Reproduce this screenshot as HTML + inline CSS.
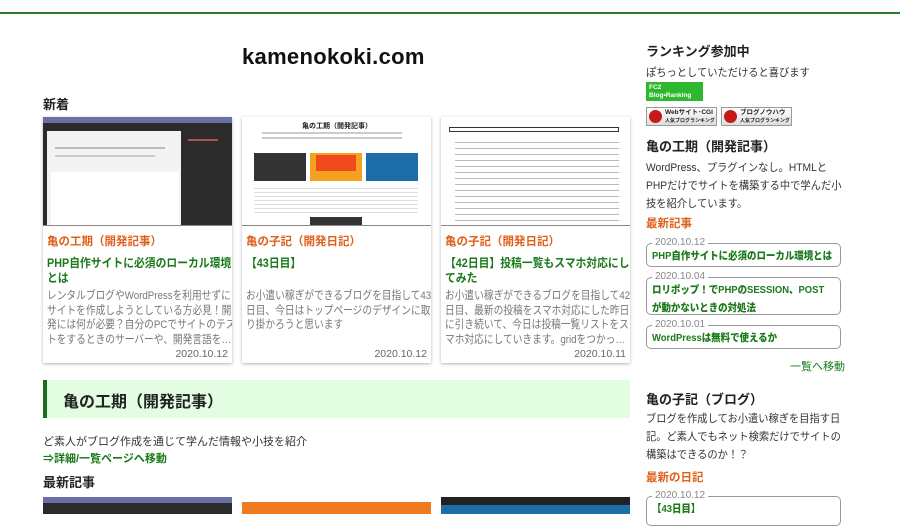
<!DOCTYPE html>
<html><head><meta charset="utf-8">
<style>
*{margin:0;padding:0;box-sizing:border-box}
body{width:900px;height:514px;overflow:hidden;background:#fff;font-family:"Liberation Sans","Noto Sans CJK JP",sans-serif;color:#333;position:relative}
.abs{position:absolute;white-space:nowrap}
.topline{left:0;top:12px;width:900px;height:2px;background:#2c7a2c}
.logo{left:242px;top:44px;font-size:22px;font-weight:bold;color:#111;letter-spacing:0.3px}
h3{font-size:13px;font-weight:bold;color:#222}
.card{width:189px;height:246px;top:117px;background:#fff;box-shadow:0 1px 3px rgba(0,0,0,.3);overflow:hidden}
.thumb{height:109px;border-bottom:1px solid #888;overflow:hidden;position:relative}
.cat{font-size:11.5px;font-weight:bold;color:#e0601a;margin:9px 0 0 4px;height:14px;line-height:14px}
.ttl{font-size:12px;font-weight:bold;color:#1a7a1a;margin:7px 0 0 4px;line-height:15px;height:30px;transform:scaleX(.9);transform-origin:left}
.dsc{font-size:11.3px;color:#777;margin:3px 0 0 4px;line-height:14.5px;height:60px;transform:scaleX(.86);transform-origin:left}
.dt{position:absolute;right:4px;bottom:3px;font-size:10.5px;color:#666}
.sb{font-size:10.8px;color:#333;line-height:18px;transform:scaleX(.95);transform-origin:left}
.box{left:646px;width:195px;border:1px solid #999;border-radius:5px;padding:3px 5px 2px 5px;font-size:10.5px;font-weight:bold;color:#1a7a1a;line-height:18px}
.box b{display:inline-block;transform:scaleX(.9);transform-origin:left}
.lg{position:absolute;top:-8px;left:5px;background:#fff;padding:0 3px;font-size:10px;color:#888;font-weight:normal;line-height:13px}
</style></head><body>
<div class="abs topline"></div>
<div class="abs logo">kamenokoki.com</div>
<div class="abs" style="left:43px;top:94px"><h3>新着</h3></div>

<div class="abs card" style="left:43px">
 <div class="thumb" style="background:#2b2b2b">
  <div style="height:6px;background:#6a6fa8"></div>
  <div style="position:absolute;left:4px;top:14px;width:134px;height:95px;background:#f3f3f3"></div>
  <div style="position:absolute;left:12px;top:30px;width:110px;height:2px;background:#bbb"></div>
  <div style="position:absolute;left:12px;top:38px;width:100px;height:2px;background:#ccc"></div>
  <div style="position:absolute;left:8px;top:55px;width:128px;height:54px;background:#fff"></div>
  <div style="position:absolute;left:145px;top:22px;width:30px;height:2px;background:#a55"></div>
 </div>
 <div class="cat">亀の工期（開発記事）</div>
 <div class="ttl">PHP自作サイトに必須のローカル環境<br>とは</div>
 <div class="dsc">レンタルブログやWordPressを利用せずに<br>サイトを作成しようとしている方必見！開<br>発には何が必要？自分のPCでサイトのテス<br>トをするときのサーバーや、開発言語を…</div>
 <div class="dt">2020.10.12</div>
</div>

<div class="abs card" style="left:242px">
 <div class="thumb" style="background:#fff">
  <div style="position:absolute;left:60px;top:4px;font-size:7px;font-weight:bold;color:#222">亀の工期（開発記事）</div>
  <div style="position:absolute;left:20px;top:15px;width:140px;height:2px;background:#ccc"></div>
  <div style="position:absolute;left:20px;top:20px;width:140px;height:2px;background:#ccc"></div>
  <div style="position:absolute;left:12px;top:36px;width:52px;height:28px;background:#333"></div>
  <div style="position:absolute;left:68px;top:36px;width:52px;height:28px;background:#f4a020"></div>
  <div style="position:absolute;left:74px;top:38px;width:40px;height:16px;background:#ee4a1a"></div>
  <div style="position:absolute;left:124px;top:36px;width:52px;height:28px;background:#1c6ea8"></div>
  <div style="position:absolute;left:12px;top:68px;width:164px;height:28px;background:repeating-linear-gradient(#fff 0 3px,#ddd 3px 4px)"></div>
  <div style="position:absolute;left:68px;top:100px;width:52px;height:9px;background:#333"></div>
 </div>
 <div class="cat">亀の子記（開発日記）</div>
 <div class="ttl">【43日目】</div>
 <div class="dsc">お小遣い稼ぎができるブログを目指して43<br>日目、今日はトップページのデザインに取<br>り掛かろうと思います</div>
 <div class="dt">2020.10.12</div>
</div>

<div class="abs card" style="left:441px">
 <div class="thumb" style="background:#fff">
  <div style="position:absolute;left:8px;top:10px;width:170px;height:5px;border:1px solid #333"></div>
  <div style="position:absolute;left:14px;top:20px;width:164px;height:88px;background:repeating-linear-gradient(#fff 0 5px,#bbb 5px 6px)"></div>
 </div>
 <div class="cat">亀の子記（開発日記）</div>
 <div class="ttl">【42日目】投稿一覧もスマホ対応にし<br>てみた</div>
 <div class="dsc">お小遣い稼ぎができるブログを目指して42<br>日目、最新の投稿をスマホ対応にした昨日<br>に引き続いて、今日は投稿一覧リストをス<br>マホ対応にしていきます。gridをつかっ…</div>
 <div class="dt">2020.10.11</div>
</div>

<div class="abs" style="left:43px;top:380px;width:587px;height:38px;background:#e2fde2;border-left:4px solid #1a6e1a;font-size:16px;font-weight:bold;color:#222;padding:8px 0 0 16px">亀の工期（開発記事）</div>
<div class="abs" style="left:43px;top:433px;font-size:11px;color:#333">ど素人がブログ作成を通じて学んだ情報や小技を紹介</div>
<div class="abs" style="left:43px;top:450px;font-size:11px;font-weight:bold;color:#1a7a1a">⇒詳細/一覧ページへ移動</div>
<div class="abs" style="left:43px;top:472px"><h3>最新記事</h3></div>
<div class="abs" style="left:43px;top:497px;width:189px;height:17px;background:#2b2b2b"><div style="height:6px;background:#6a6fa8"></div></div>
<div class="abs" style="left:242px;top:497px;width:189px;height:17px;background:#f07a20"><div style="height:5px;background:#fff"></div></div>
<div class="abs" style="left:441px;top:497px;width:189px;height:17px;background:#1c6ea8"><div style="height:8px;background:#222"></div></div>

<div class="abs" style="left:646px;top:41px"><h3>ランキング参加中</h3></div>
<div class="abs sb" style="left:646px;top:64px">ぽちっとしていただけると喜びます</div>
<div class="abs" style="left:646px;top:82px;width:57px;height:19px;background:#2eb82e;color:#fff;font-size:6.5px;font-weight:bold;line-height:8px;padding:2px 0 0 3px">FC2<br>Blog•Ranking</div>
<div class="abs" style="left:646px;top:107px;width:71px;height:19px;background:linear-gradient(#fff,#ddd);border:1px solid #999;font-size:6.5px;font-weight:bold;color:#222;padding:1px 0 0 18px;line-height:8px;overflow:hidden"><span style="position:absolute;left:2px;top:2px;width:13px;height:13px;border-radius:50%;background:#c41a1a"></span>Webサイト･CGI<br><span style="font-size:5px">人気ブログランキング</span></div>
<div class="abs" style="left:721px;top:107px;width:71px;height:19px;background:linear-gradient(#fff,#ddd);border:1px solid #999;font-size:6.5px;font-weight:bold;color:#222;padding:1px 0 0 18px;line-height:8px;overflow:hidden"><span style="position:absolute;left:2px;top:2px;width:13px;height:13px;border-radius:50%;background:#c41a1a"></span>ブログノウハウ<br><span style="font-size:5px">人気ブログランキング</span></div>
<div class="abs" style="left:646px;top:136px"><h3>亀の工期（開発記事）</h3></div>
<div class="abs sb" style="left:646px;top:159px">WordPress、プラグインなし。HTMLと<br>PHPだけでサイトを構築する中で学んだ小<br>技を紹介しています。</div>
<div class="abs" style="left:646px;top:215px;font-size:11.5px;font-weight:bold;color:#e0601a">最新記事</div>
<div class="abs box" style="top:243px;height:24px"><span class="lg">2020.10.12</span><b>PHP自作サイトに必須のローカル環境とは</b></div>
<div class="abs box" style="top:277px;height:38px"><span class="lg">2020.10.04</span><b>ロリポップ！でPHPのSESSION、POST<br>が動かないときの対処法</b></div>
<div class="abs box" style="top:325px;height:24px"><span class="lg">2020.10.01</span><b>WordPressは無料で使えるか</b></div>
<div class="abs" style="left:790px;top:358px;font-size:11px;color:#1a7a1a">一覧へ移動</div>
<div class="abs" style="left:646px;top:389px"><h3>亀の子記（ブログ）</h3></div>
<div class="abs sb" style="left:646px;top:410px">ブログを作成してお小遣い稼ぎを目指す日<br>記。ど素人でもネット検索だけでサイトの<br>構築はできるのか！？</div>
<div class="abs" style="left:646px;top:469px;font-size:11.5px;font-weight:bold;color:#e0601a">最新の日記</div>
<div class="abs box" style="top:496px;height:30px"><span class="lg">2020.10.12</span><b>【43日目】</b></div>
</body></html>
